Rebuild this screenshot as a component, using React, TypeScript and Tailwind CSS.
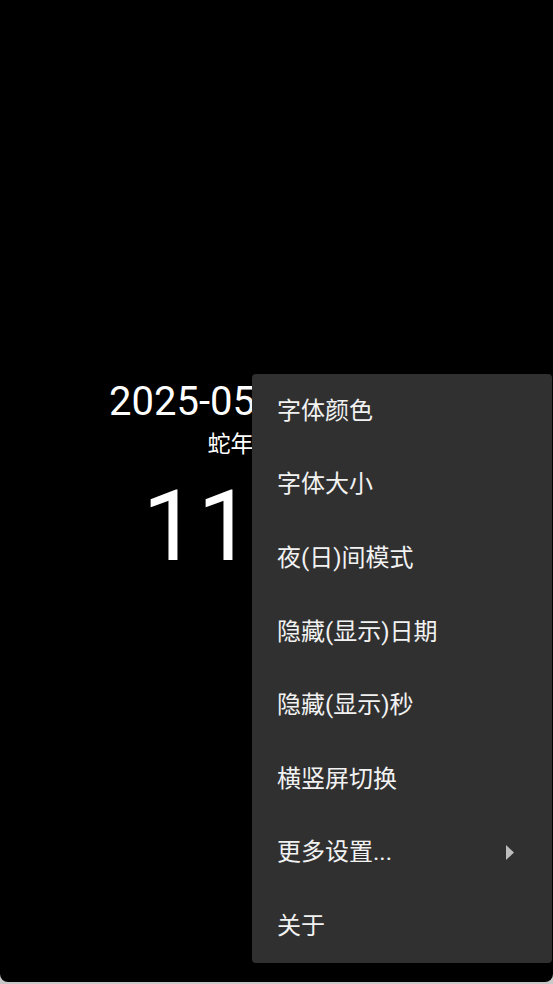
const items = [
  "字体颜色",
  "字体大小",
  "夜(日)间模式",
  "隐藏(显示)日期",
  "隐藏(显示)秒",
  "横竖屏切换",
  "更多设置...",
  "关于",
];

export default function App() {
  return (
    <div className="h-[984px] w-[553px] overflow-hidden bg-[#c8c8c8] font-['Roboto','Noto_Sans_CJK_SC',sans-serif]">
      <div className="relative h-[982px] overflow-hidden rounded-b-[8px] bg-black text-white">
        {/* clock behind the menu */}
        <div className="flex flex-col items-center pt-[378px]">
          <div className="pr-[3px] text-[40px] leading-[48px] whitespace-nowrap">2025-05-20 星期二</div>
          <div className="mt-1 text-[23px] leading-[30px] whitespace-nowrap">蛇年四月廿三</div>
          <div className="mt-[18px] pr-[24px] text-[98px] leading-none whitespace-nowrap">11:23</div>
        </div>

        {/* popup menu */}
        <div className="absolute left-[252px] top-[374px] w-[300px] rounded-[4px] bg-[#303030] shadow-lg">
          {items.map((label, i) => (
            <div
              key={label}
              className="flex h-[73.6px] items-center justify-between pl-[25px] pr-[38px] text-[24px] text-[#f2f2f2]"
            >
              <span className="whitespace-nowrap">{label}</span>
              {i === 6 && (
                <svg width="8" height="15" viewBox="0 0 8 15" className="fill-[#bdbdbd]">
                  <path d="M0 0 L8 7.5 L0 15 Z" />
                </svg>
              )}
            </div>
          ))}
        </div>
      </div>
    </div>
  );
}
